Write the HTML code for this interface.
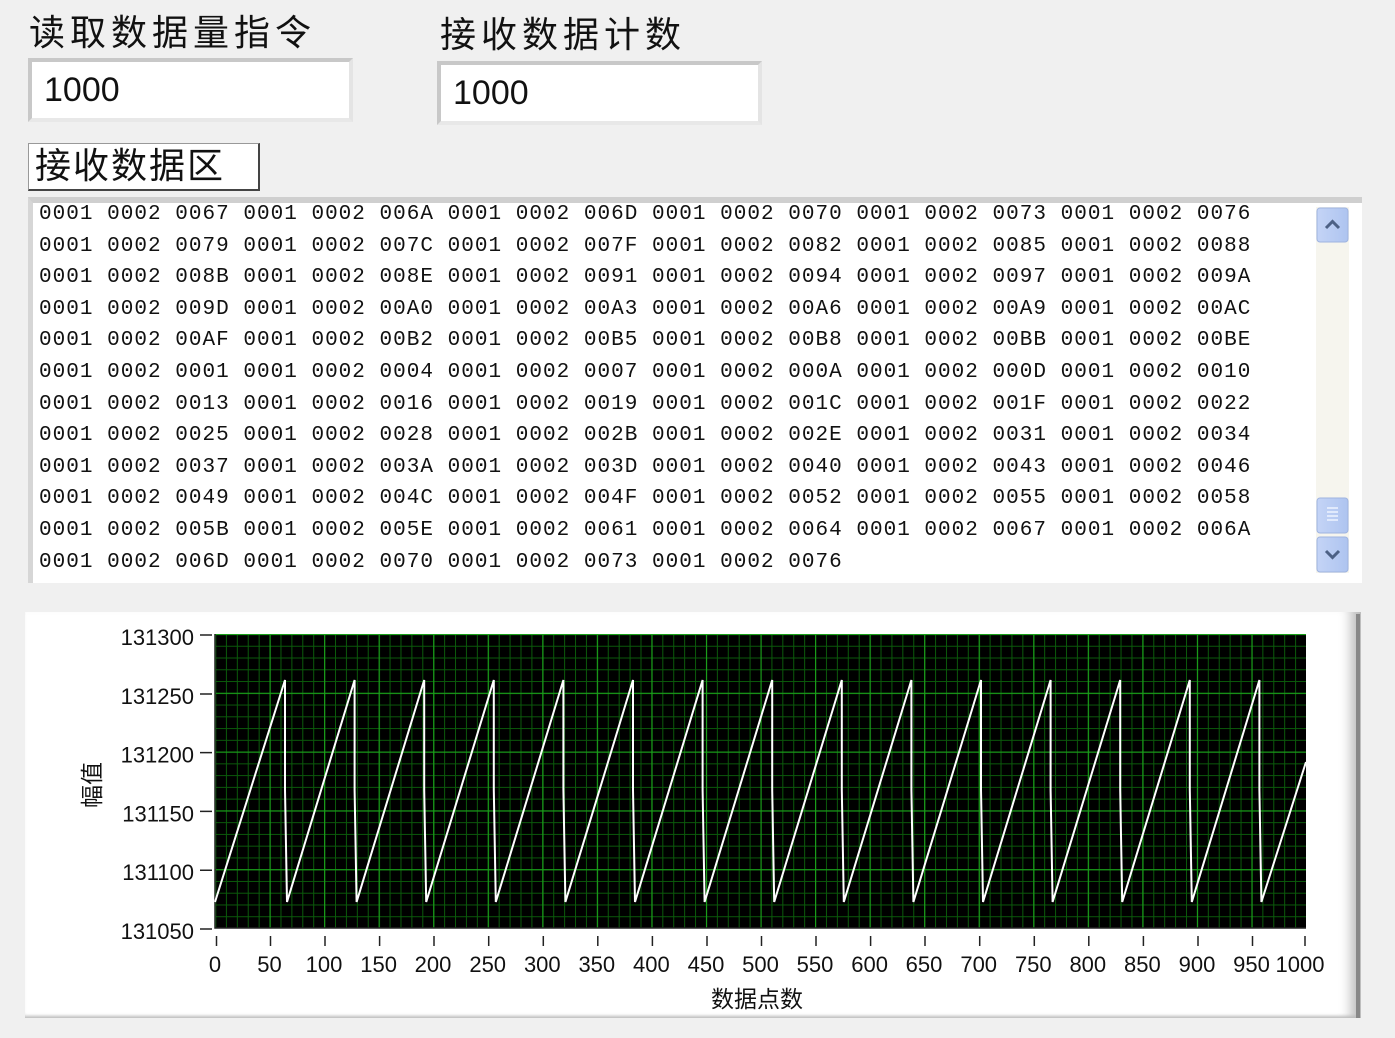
<!DOCTYPE html>
<html><head><meta charset="utf-8"><style>
body{margin:0;width:1395px;height:1038px;background:#f0f0f0;position:relative;overflow:hidden;font-family:"Liberation Sans","Noto Sans CJK SC",sans-serif;}
.abs{position:absolute}
.lbl{font-size:36px;color:#111;letter-spacing:5px;line-height:40px;font-family:"Liberation Sans","WenQuanYi Zen Hei","Noto Sans CJK SC",sans-serif}
.inp{background:#fff;border-top:4px solid #c8c8c8;border-left:4px solid #c8c8c8;border-right:4px solid #e4e4e4;border-bottom:4px solid #e8e8e8;box-sizing:border-box;font-size:34px;padding-left:12px;line-height:56px;color:#111}
.ta{font-family:"Liberation Mono",monospace;font-size:21px;letter-spacing:1.02px;color:#111;white-space:pre;line-height:31.6px}
</style></head><body>
<div class="abs lbl" style="left:29px;top:13px">读取数据量指令</div>
<div class="abs lbl" style="left:440px;top:15px">接收数据计数</div>
<div class="abs inp" style="left:28px;top:58px;width:325px;height:64px">1000</div>
<div class="abs inp" style="left:437px;top:61px;width:325px;height:64px">1000</div>
<div class="abs lbl" style="left:28px;top:143px;width:232px;height:48px;background:#fff;border:1px solid #999;border-right:2px solid #444;border-bottom:2px solid #444;box-sizing:border-box;padding-left:6px;line-height:44px;letter-spacing:2px">接收数据区</div>
<div class="abs" style="left:28px;top:197px;width:1334px;height:386px;background:#fff;border-top:6px solid #cfcfcf;border-left:5px solid #d6d6d6;box-sizing:border-box;overflow:hidden">
<div class="abs ta" style="left:6px;top:-4px">0001 0002 0067 0001 0002 006A 0001 0002 006D 0001 0002 0070 0001 0002 0073 0001 0002 0076
0001 0002 0079 0001 0002 007C 0001 0002 007F 0001 0002 0082 0001 0002 0085 0001 0002 0088
0001 0002 008B 0001 0002 008E 0001 0002 0091 0001 0002 0094 0001 0002 0097 0001 0002 009A
0001 0002 009D 0001 0002 00A0 0001 0002 00A3 0001 0002 00A6 0001 0002 00A9 0001 0002 00AC
0001 0002 00AF 0001 0002 00B2 0001 0002 00B5 0001 0002 00B8 0001 0002 00BB 0001 0002 00BE
0001 0002 0001 0001 0002 0004 0001 0002 0007 0001 0002 000A 0001 0002 000D 0001 0002 0010
0001 0002 0013 0001 0002 0016 0001 0002 0019 0001 0002 001C 0001 0002 001F 0001 0002 0022
0001 0002 0025 0001 0002 0028 0001 0002 002B 0001 0002 002E 0001 0002 0031 0001 0002 0034
0001 0002 0037 0001 0002 003A 0001 0002 003D 0001 0002 0040 0001 0002 0043 0001 0002 0046
0001 0002 0049 0001 0002 004C 0001 0002 004F 0001 0002 0052 0001 0002 0055 0001 0002 0058
0001 0002 005B 0001 0002 005E 0001 0002 0061 0001 0002 0064 0001 0002 0067 0001 0002 006A
0001 0002 006D 0001 0002 0070 0001 0002 0073 0001 0002 0076</div>
</div>
<div class="abs" style="left:1316px;top:207px;width:33px;height:366px;background:#f6f5ee"></div>
<svg class="abs" style="left:1316px;top:207px" width="33" height="366">
<defs><linearGradient id="bg" x1="0" x2="1"><stop offset="0" stop-color="#c4d4f6"/><stop offset="1" stop-color="#aec4f0"/></linearGradient></defs>
<rect x="1" y="1" width="31" height="34" rx="3" fill="url(#bg)" stroke="#9fb4e0"/>
<path d="M10 21 L16.5 14.5 L23 21" fill="none" stroke="#4d6185" stroke-width="3"/>
<rect x="1" y="291" width="31" height="35" rx="3" fill="url(#bg)" stroke="#9fb4e0"/>
<path d="M11 301h11M11 305h11M11 309h11M11 313h11" stroke="#eef3ff" stroke-width="1.5"/>
<rect x="1" y="330" width="31" height="35" rx="3" fill="url(#bg)" stroke="#9fb4e0"/>
<path d="M10 344 L16.5 350.5 L23 344" fill="none" stroke="#4d6185" stroke-width="3"/>
</svg>
<div class="abs" style="left:25px;top:612px;width:1336px;height:406px;background:#fff;box-shadow:inset -20px 0 12px -10px #bbb, inset 0 -4px 3px -2px #bbb"></div>
<div class="abs" style="left:1356px;top:614px;width:4px;height:404px;background:#888"></div>
<svg class="abs" style="left:0;top:0" width="1395" height="1038">
<defs>
<pattern id="mn" x="215" y="634" width="10.91" height="11.76" patternUnits="userSpaceOnUse"><path d="M0.5 0V11.76M0 0.5H10.91" stroke="#0b5a0b" stroke-width="1"/></pattern>
<pattern id="mj" x="215" y="634" width="54.55" height="58.8" patternUnits="userSpaceOnUse"><path d="M0.5 0V58.8M0 0.5H54.55" stroke="#1aa01a" stroke-width="1.3"/></pattern>
</defs>
<rect x="215" y="634" width="1091" height="294" fill="#000"/>
<rect x="215" y="634" width="1091" height="294" fill="url(#mn)"/>
<rect x="215" y="634" width="1091" height="294" fill="url(#mj)"/>
<path d="M215 634V928H1306" fill="none" stroke="#222" stroke-width="1.5"/>
<polyline fill="none" stroke="#fff" stroke-width="2" points="215,902 285,680 285,790 287,902 354.6,680 354.6,790 356.6,902 424.2,680 424.2,790 426.2,902 493.8,680 493.8,790 495.8,902 563.4,680 563.4,790 565.4,902 633,680 633,790 635,902 702.6,680 702.6,790 704.6,902 772.2,680 772.2,790 774.2,902 841.8,680 841.8,790 843.8,902 911.4,680 911.4,790 913.4,902 981,680 981,790 983,902 1050.6,680 1050.6,790 1052.6,902 1120.2,680 1120.2,790 1122.2,902 1189.8,680 1189.8,790 1191.8,902 1259.4,680 1259.4,790 1261.4,902 1306,762"/>
<g stroke="#222" stroke-width="1.5">
<path d="M200 635h12M200 694h12M200 752.6h12M200 811.4h12M200 870.2h12M200 929h12"/>
<path d="M216.5 936v10M270.5 936v10M325 936v10M379.6 936v10M434 936v10M488.7 936v10M543.3 936v10M597.8 936v10M652.4 936v10M707 936v10M761.5 936v10M816 936v10M870.6 936v10M925 936v10M979.7 936v10M1034.3 936v10M1088.8 936v10M1143.4 936v10M1198 936v10M1252.5 936v10M1305 936v10"/>
</g>
<g font-family="Liberation Sans, sans-serif" font-size="22" fill="#111" text-anchor="end">
<text x="194" y="645">131300</text><text x="194" y="704">131250</text><text x="194" y="762.6">131200</text><text x="194" y="821.4">131150</text><text x="194" y="880.2">131100</text><text x="194" y="939">131050</text>
</g>
<g font-family="Liberation Sans, sans-serif" font-size="22" fill="#111" text-anchor="middle">
<text x="215" y="972">0</text><text x="269.5" y="972">50</text><text x="324" y="972">100</text><text x="378.6" y="972">150</text><text x="433" y="972">200</text><text x="487.7" y="972">250</text><text x="542.3" y="972">300</text><text x="596.8" y="972">350</text><text x="651.4" y="972">400</text><text x="706" y="972">450</text><text x="760.5" y="972">500</text><text x="815" y="972">550</text><text x="869.6" y="972">600</text><text x="924" y="972">650</text><text x="978.7" y="972">700</text><text x="1033.3" y="972">750</text><text x="1087.8" y="972">800</text><text x="1142.4" y="972">850</text><text x="1197" y="972">900</text><text x="1251.5" y="972">950</text><text x="1300" y="972">1000</text>
</g>
<text x="757" y="1007" font-family="Liberation Sans, WenQuanYi Zen Hei, Noto Sans CJK SC, sans-serif" font-size="23" fill="#111" text-anchor="middle">数据点数</text>
<text transform="translate(100 785) rotate(-90)" font-family="Liberation Sans, WenQuanYi Zen Hei, Noto Sans CJK SC, sans-serif" font-size="23" fill="#111" text-anchor="middle">幅值</text>
</svg>
</body></html>
